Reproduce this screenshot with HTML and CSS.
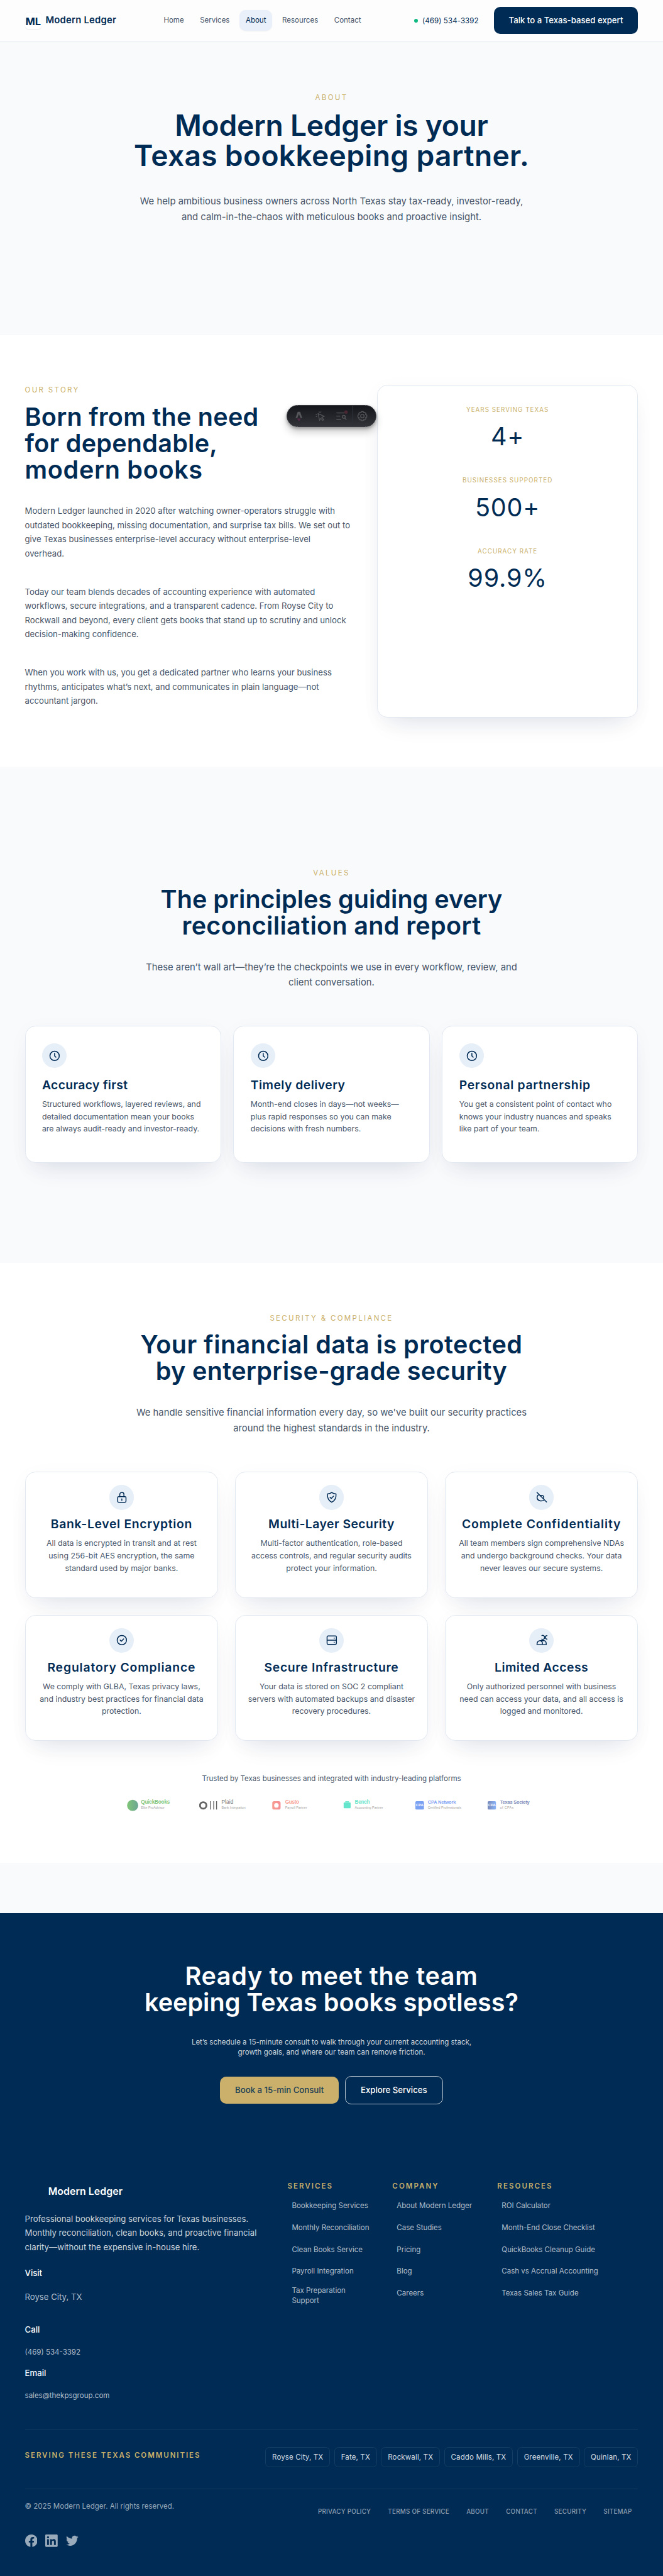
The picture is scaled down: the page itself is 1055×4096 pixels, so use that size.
FILE: index.html
```html
<!DOCTYPE html>
<html lang="en">
<head>
<meta charset="utf-8">
<title>About | Modern Ledger</title>
<link rel="stylesheet" href="styles.css">
</head>
<body>
<header class="header">
  <a class="brand"><span class="brand-mark">ML</span><span class="brand-name">Modern Ledger</span></a>
  <nav class="nav">
    <a>Home</a><a>Services</a><a class="active">About</a><a>Resources</a><a>Contact</a>
  </nav>
  <a class="phone"><span class="dot"></span>(469) 534-3392</a>
  <a class="btn btn-navy">Talk to a Texas-based expert</a>
</header>

<section class="hero">
  <p class="eyebrow">About</p>
  <h1><span class="track-tight">Modern Ledger is your</span><br><span class="track-2">Texas bookkeeping partner.</span></h1>
  <p class="lead">We help ambitious business owners across North Texas stay tax-ready, investor-ready,<br>and calm-in-the-chaos with meticulous books and proactive insight.</p>
</section>

<section class="story">
  <div class="story-text">
    <p class="eyebrow">Our story</p>
    <h2><span class="track-1">Born from the need</span><br><span class="track-1">for dependable,</span><br><span class="track-4">modern books</span></h2>
    <p class="para">Modern Ledger launched in 2020 after watching owner-operators struggle with<br>outdated bookkeeping, missing documentation, and surprise tax bills. We set out to<br>give Texas businesses enterprise-level accuracy without enterprise-level<br>overhead.</p>
    <p class="para">Today our team blends decades of accounting experience with automated<br>workflows, secure integrations, and a transparent cadence. From Royse City to<br>Rockwall and beyond, every client gets books that stand up to scrutiny and unlock<br>decision-making confidence.</p>
    <p class="para">When you work with us, you get a dedicated partner who learns your business<br>rhythms, anticipates what’s next, and communicates in plain language—not<br>accountant jargon.</p>
  </div>
  <div class="card stats">
    <div class="stat"><p class="stat-label">Years serving Texas</p><p class="stat-value">4+</p></div>
    <div class="stat"><p class="stat-label">Businesses supported</p><p class="stat-value">500+</p></div>
    <div class="stat"><p class="stat-label">Accuracy rate</p><p class="stat-value">99.9%</p></div>
  </div>
  <div class="toolbar">
    <svg class="tool" viewBox="0 0 24 24"><path d="M9.3 2.5h5.4L19.6 17c-1.800-.8-3-1-4.300-1.200L12 7.200 8.700 15.800C7.400 16 6.200 16.200 4.400 17z" fill="#55565a"/><path d="M8.200 17.200h7.600c0 2-1.700 2.700-2 4.300-.6.500-1.200 1-1.800 2-.6-2.200-3.300-2.800-3.800-6.300z" fill="#56294a"/></svg>
    <svg class="tool" viewBox="0 0 24 24" fill="none" stroke="#55565a" stroke-width="1.700" stroke-linejoin="round" stroke-linecap="round"><path d="M7 6.500l14 6-5.800 2.300 4.500 5-2.200 1.900-4.400-5-2.600 4.800z"/><path d="M2.500 8.500l1.500.3M3 13l1.500-1M9.500 2.500L10 4M13.500 2.500L12.800 4"/></svg>
    <svg class="tool" viewBox="0 0 24 24" fill="none" stroke="#55565a" stroke-width="1.900" stroke-linecap="round"><path d="M2.500 5h16M2.500 12h7M2.500 19h9"/><circle cx="18" cy="13.500" r="3.300"/><path d="M20.500 16.500l3 3"/><circle cx="23" cy="3" r="3.800" fill="#4a2833" stroke="none"/></svg>
    <span class="tool-divider"></span>
    <svg class="tool" viewBox="0 0 24 24" fill="none" stroke="#55565a" stroke-width="1.900" stroke-linejoin="round"><path d="M10 2h4l.8 2.300 2.200-.9 2.900 2.900-.9 2.200L21.800 10v4l-2.800 1.500.9 2.200-2.900 2.900-2.200-.9L14 22h-4l-.8-2.300-2.200.9-2.900-2.900.9-2.200L2.200 14v-4L5 8.500l-.9-2.200L7 3.400l2.200.9z"/><circle cx="12" cy="12" r="3.800"/></svg>
  </div>
</section>

<section class="values">
  <p class="eyebrow">Values</p>
  <h2>The principles guiding every<br><span class="track-2">reconciliation and report</span></h2>
  <p class="lead">These aren’t wall art—they’re the checkpoints we use in every workflow, review, and<br>client conversation.</p>
  <div class="value-grid">
    <article class="card value">
      <span class="icon"><svg viewBox="0 0 24 24"><circle cx="12" cy="12" r="9"/><path d="M12 7v5l2.500 2.500"/></svg></span>
      <h3 class="track-2">Accuracy first</h3>
      <p>Structured workflows, layered reviews, and<br>detailed documentation mean your books<br>are always audit-ready and investor-ready.</p>
    </article>
    <article class="card value">
      <span class="icon"><svg viewBox="0 0 24 24"><circle cx="12" cy="12" r="9"/><path d="M12 7v5l2.500 2.500"/></svg></span>
      <h3 class="track-3">Timely delivery</h3>
      <p>Month-end closes in days—not weeks—<br>plus rapid responses so you can make<br>decisions with fresh numbers.</p>
    </article>
    <article class="card value">
      <span class="icon"><svg viewBox="0 0 24 24"><circle cx="12" cy="12" r="9"/><path d="M12 7v5l2.500 2.500"/></svg></span>
      <h3 class="track-4">Personal partnership</h3>
      <p>You get a consistent point of contact who<br>knows your industry nuances and speaks<br>like part of your team.</p>
    </article>
  </div>
</section>

<section class="security">
  <p class="eyebrow">Security &amp; compliance</p>
  <h2><span class="track-3">Your financial data is protected</span><br><span class="track-2">by enterprise-grade security</span></h2>
  <p class="lead">We handle sensitive financial information every day, so we've built our security practices<br>around the highest standards in the industry.</p>
  <div class="security-grid">
    <article class="card guard">
      <span class="icon"><svg viewBox="0 0 24 24"><rect x="4" y="10.500" width="16" height="11" rx="2"/><path d="M8 10.500V6.500a4 4 0 0 1 8 0v4M12 15v3"/></svg></span>
      <h3 class="track-4">Bank-Level Encryption</h3>
      <p>All data is encrypted in transit and at rest<br>using 256-bit AES encryption, the same<br>standard used by major banks.</p>
    </article>
    <article class="card guard">
      <span class="icon"><svg viewBox="0 0 24 24"><path d="M12 2.500c2.500 2 5 2.700 8.300 2.900.5 8-2.300 13-8.300 16.100-6-3.100-8.800-8.100-8.300-16.100C7 5.200 9.500 4.500 12 2.500z"/><path d="M8.800 12l2.300 2.300 4.300-4.600"/></svg></span>
      <h3 class="track-3">Multi-Layer Security</h3>
      <p>Multi-factor authentication, role-based<br>access controls, and regular security audits<br>protect your information.</p>
    </article>
    <article class="card guard">
      <span class="icon"><svg viewBox="0 0 24 24"><path d="M3 2.500l18.500 18.500M5.500 7.500C1.500 11 2.800 17.500 9 18.700c2.500.5 4.800.3 6.800-1M9 9.200c1.500-1.800 6-1.300 7 1.300.4 1.500.2 3-.8 4"/></svg></span>
      <h3 class="track-5">Complete Confidentiality</h3>
      <p>All team members sign comprehensive NDAs<br>and undergo background checks. Your data<br>never leaves our secure systems.</p>
    </article>
    <article class="card guard">
      <span class="icon"><svg viewBox="0 0 24 24"><circle cx="12" cy="12" r="9"/><path d="M8.800 12l2.300 2.300 4.300-4.600"/></svg></span>
      <h3 class="track-5">Regulatory Compliance</h3>
      <p>We comply with GLBA, Texas privacy laws,<br>and industry best practices for financial data<br>protection.</p>
    </article>
    <article class="card guard">
      <span class="icon"><svg viewBox="0 0 24 24"><path d="M3 12.200V6a2 2 0 0 1 2-2h14a2 2 0 0 1 2 2v6.200M3 12.200h18M3 12.200v6a2 2 0 0 0 2 2h14a2 2 0 0 0 2-2v-6M16.800 8v.4M16.800 16v.4"/></svg></span>
      <h3 class="track-4">Secure Infrastructure</h3>
      <p>Your data is stored on SOC 2 compliant<br>servers with automated backups and disaster<br>recovery procedures.</p>
    </article>
    <article class="card guard">
      <span class="icon"><svg viewBox="0 0 24 24"><path d="M12.500 3.200c2-1 5 .2 5.300 3.300.2 3.300-3.200 5-5.600 3.700M22.500 3.200c-2 0-3.300 1.200-3.300 3.300s1.300 3.700 3.300 3.700M3 20.500h18c0-4.500-1.500-7.500-4.500-7.500H9.500C5.500 13 3 15.500 3 20.500zM10.500 13.300c2.500 1 3.300 3.500 3 7"/></svg></span>
      <h3 class="track-3">Limited Access</h3>
      <p>Only authorized personnel with business<br>need can access your data, and all access is<br>logged and monitored.</p>
    </article>
  </div>
  <p class="trusted">Trusted by Texas businesses and integrated with industry-leading platforms</p>
  <div class="logos">
    <svg viewBox="0 0 139 26">
      <defs><linearGradient id="qb"><stop offset="0" stop-color="#2ca01c"/><stop offset="1" stop-color="#0b6b4f"/></linearGradient></defs>
      <circle cx="11" cy="13" r="10.800" fill="url(#qb)"/>
      <text class="logo-name" x="27" y="10" textLength="56" fill="#2ca01c">QuickBooks</text><text class="logo-sub" x="27" y="19" textLength="45.500">Elite ProAdvisor</text>
    </svg>
    <svg viewBox="0 0 139 26">
      <circle cx="7.700" cy="13" r="6.200" fill="none" stroke="#000" stroke-width="3.500"/><path d="M22 5v16M28 5v16M33.500 5v16" stroke="#000" stroke-width="1.700"/>
      <text class="logo-name logo-regular" x="43" y="10" textLength="23" fill="#000">Plaid</text><text class="logo-sub" x="43" y="19" textLength="46.500">Bank Integration</text>
    </svg>
    <svg viewBox="0 0 139 26">
      <defs><linearGradient id="gu"><stop offset="0" stop-color="#f45d48"/><stop offset="1" stop-color="#ee4350"/></linearGradient></defs>
      <path fill-rule="evenodd" fill="url(#gu)" d="M5 5h9a3.500 3.500 0 0 1 3.500 3.500v9A3.500 3.500 0 0 1 14 21H5a3.500 3.500 0 0 1-3.500-3.500v-9A3.500 3.500 0 0 1 5 5zM9.500 8.600a4.400 4.400 0 1 0 0 8.800 4.400 4.400 0 1 0 0-8.800z"/>
      <text class="logo-name" x="26.500" y="10" textLength="27" fill="#f45d48">Gusto</text><text class="logo-sub" x="26.500" y="19" textLength="42">Payroll Partner</text>
    </svg>
    <svg viewBox="0 0 139 26">
      <rect x="1" y="7.200" width="13.500" height="11.300" rx="1.500" fill="#00d4aa"/><rect x="4.200" y="5" width="7" height="1.700" fill="#00d4aa"/>
      <text class="logo-name" x="22.500" y="10" textLength="29" fill="#00d4aa">Bench</text><text class="logo-sub" x="22.500" y="19" textLength="54.500">Accounting Partner</text>
    </svg>
    <svg viewBox="0 0 139 26">
      <rect x="0" y="5" width="16.500" height="16" rx="2" fill="#2563eb"/><text class="logo-cpa" x="1" y="14.300" textLength="14.500">CPA</text>
      <text class="logo-name logo-small" x="24" y="10" textLength="54" fill="#2563eb">CPA Network</text><text class="logo-sub" x="24" y="19" textLength="64.500">Certified Professionals</text>
    </svg>
    <svg viewBox="0 0 139 26">
      <defs><linearGradient id="tx"><stop offset="0" stop-color="#1e3a8a"/><stop offset="1" stop-color="#3b82f6"/></linearGradient></defs>
      <rect x="0" y="5" width="16" height="16" rx="2" fill="url(#tx)"/><text class="logo-cpa" x=".8" y="14.300" textLength="14.500">CPA</text>
      <text class="logo-name logo-small" x="24" y="10" textLength="57" fill="#1e3a8a">Texas Society</text><text class="logo-sub" x="24" y="19" textLength="26" fill="#555">of CPAs</text>
    </svg>
  </div>
</section>

<section class="cta">
  <h2><span class="track-4">Ready to meet the team</span><br>keeping Texas books spotless?</h2>
  <p>Let’s schedule a 15-minute consult to walk through your current accounting stack,<br>growth goals, and where our team can remove friction.</p>
  <div class="cta-buttons"><a class="btn btn-gold">Book a 15-min Consult</a><a class="btn btn-outline">Explore Services</a></div>
</section>

<footer class="footer">
  <div class="footer-top">
    <div class="footer-about">
      <p class="footer-brand">Modern Ledger</p>
      <p class="footer-desc">Professional bookkeeping services for Texas businesses.<br>Monthly reconciliation, clean books, and proactive financial<br>clarity—without the expensive in-house hire.</p>
      <p class="term">Visit</p><p class="detail city">Royse City, TX</p>
      <p class="term">Call</p><p class="detail">(469) 534-3392</p>
      <p class="term">Email</p><p class="detail">sales@thekpsgroup.com</p>
    </div>
    <div class="footer-col"><h4>Services</h4><ul><li>Bookkeeping Services</li><li>Monthly Reconciliation</li><li>Clean Books Service</li><li>Payroll Integration</li><li class="two-line">Tax Preparation<br>Support</li></ul></div>
    <div class="footer-col"><h4>Company</h4><ul><li>About Modern Ledger</li><li>Case Studies</li><li>Pricing</li><li>Blog</li><li>Careers</li></ul></div>
    <div class="footer-col"><h4>Resources</h4><ul><li>ROI Calculator</li><li>Month-End Close Checklist</li><li>QuickBooks Cleanup Guide</li><li>Cash vs Accrual Accounting</li><li>Texas Sales Tax Guide</li></ul></div>
  </div>
  <div class="communities">
    <h4>Serving these Texas communities</h4>
    <div class="pills"><span>Royse City, TX</span><span>Fate, TX</span><span>Rockwall, TX</span><span>Caddo Mills, TX</span><span>Greenville, TX</span><span>Quinlan, TX</span></div>
  </div>
  <div class="legal">
    <div>
      <p class="copyright">© 2025 Modern Ledger. All rights reserved.</p>
      <div class="social">
        <svg viewBox="0 0 24 24"><path d="M24 12.073C24 5.446 18.627.073 12 .073S0 5.446 0 12.073c0 5.990 4.388 10.954 10.125 11.854v-8.385H7.078v-3.470h3.047V9.430c0-3.007 1.792-4.669 4.533-4.669 1.312 0 2.686.235 2.686.235v2.953H15.830c-1.491 0-1.956.925-1.956 1.874v2.250h3.328l-.532 3.470h-2.796v8.385C19.612 23.027 24 18.062 24 12.073z"/></svg>
        <svg viewBox="0 0 24 24"><path d="M20.447 20.452h-3.554v-5.569c0-1.328-.027-3.037-1.852-3.037-1.853 0-2.136 1.445-2.136 2.939v5.667H9.351V9h3.414v1.561h.046c.477-.9 1.637-1.850 3.370-1.850 3.601 0 4.267 2.370 4.267 5.455v6.286zM5.337 7.433a2.062 2.062 0 0 1-2.063-2.065 2.064 2.064 0 1 1 2.063 2.065zm1.782 13.019H3.555V9h3.564v11.452zM22.225 0H1.771C.792 0 0 .774 0 1.729v20.542C0 23.227.792 24 1.771 24h20.451C23.200 24 24 23.227 24 22.271V1.729C24 .774 23.200 0 22.222 0h.003z"/></svg>
        <svg viewBox="0 0 24 24"><path d="M23.953 4.570a10 10 0 0 1-2.825.775 4.958 4.958 0 0 0 2.163-2.723c-.951.555-2.005.959-3.127 1.184a4.920 4.920 0 0 0-8.384 4.482C7.690 8.095 4.067 6.130 1.640 3.162a4.822 4.822 0 0 0-.666 2.475c0 1.710.870 3.213 2.188 4.096a4.904 4.904 0 0 1-2.228-.616v.060a4.923 4.923 0 0 0 3.946 4.827 4.996 4.996 0 0 1-2.212.085 4.936 4.936 0 0 0 4.604 3.417 9.867 9.867 0 0 1-6.102 2.105c-.390 0-.779-.023-1.170-.067a13.995 13.995 0 0 0 7.557 2.209c9.053 0 13.998-7.496 13.998-13.985 0-.210 0-.420-.015-.630A9.935 9.935 0 0 0 24 4.590z"/></svg>
      </div>
    </div>
    <nav class="legal-nav"><a>Privacy Policy</a><a>Terms of Service</a><a>About</a><a>Contact</a><a>Security</a><a>Sitemap</a></nav>
  </div>
</footer>
</body>
</html>
```
FILE: styles.css
```css
:root { --navy: #002b54; --gold: #cab06a; --slate: #475569; --line: #e2e8f0; --mist: #f9fafc; --display: Inter, "Liberation Sans", sans-serif; }
/* 1rem equals ten design pixels */
html { font-size: 8.2417px; }
* { box-sizing: border-box; margin: 0; padding: 0; }
body { font-family: Inter, "Liberation Sans", sans-serif; font-size: 1.6rem; color: var(--slate); background: var(--mist); white-space: nowrap; }
ul { list-style: none; }

.header { height: 8.1rem; display: flex; align-items: center; padding: 0 4.8rem; background: #fdfdfe; border-bottom: 1px solid var(--line); color: var(--navy); }
.brand { display: flex; align-items: center; gap: .8rem; width: 25.6rem; }
.brand-mark { width: 3.2rem; height: 3.2rem; line-height: 3.4rem; text-align: center; font-size: 2rem; font-weight: 700; background: #fff; border-radius: .6rem; box-shadow: 0 .1rem .2rem rgba(0, 0, 0, .08); }
.brand-name { font-family: var(--display); font-size: 1.8rem; font-weight: 600; line-height: 2.8rem; letter-spacing: .025rem; }
.nav { display: flex; gap: .7rem; flex: 1; }
.nav a { padding: 0 1.2rem; line-height: 4rem; font-size: 1.4rem; color: var(--slate); border-radius: 1.2rem; }
.nav .active { background: #e9f0f9; color: var(--navy); box-shadow: 0 .1rem .2rem rgba(0, 0, 0, .05); }
.phone { display: flex; align-items: center; gap: .8rem; margin-right: 2.9rem; font-size: 1.4rem; letter-spacing: .01rem; }
.dot { width: .8rem; height: .8rem; border-radius: 50%; background: #10b981; }
.btn { height: 5.2rem; line-height: 5.2rem; border-radius: 1.2rem; font-size: 1.6rem; font-weight: 500; text-align: center; }
.btn-navy { background: var(--navy); color: #fff; width: 27.9rem; }

.eyebrow { font-size: 1.4rem; line-height: 2rem; letter-spacing: .28rem; text-transform: uppercase; color: var(--gold); }
h1, h2, h3 { font-family: var(--display); font-weight: 600; color: var(--navy); }
h2 { font-size: 4.8rem; line-height: 5.1rem; }
.lead { font-size: 1.8rem; line-height: 2.97rem; }
.track-tight { letter-spacing: -.03rem; }
.track-1 { letter-spacing: .03rem; }
.track-2 { letter-spacing: .04rem; }
.track-3 { letter-spacing: .056rem; }
.track-4 { letter-spacing: .082rem; }
.track-5 { letter-spacing: .104rem; }

.hero { height: 56.55rem; padding-top: 9.69rem; background: var(--mist); text-align: center; }
.hero h1 { margin-top: 1.6rem; font-size: 5.6rem; line-height: 5.82rem; }
.hero .lead { margin-top: 4.35rem; }

.card { background: #fff; border: 1px solid var(--line); border-radius: 2rem; box-shadow: 0 2.8rem 4.8rem -2.4rem rgba(0, 43, 84, .14), 0 .8rem 4rem rgba(0, 43, 84, .03); }
.story { position: relative; height: 83.4rem; padding: 9.6rem 4.8rem 0; display: grid; grid-template-columns: 63.2rem 50.4rem; gap: 4.8rem; background: #fff; }
.story .eyebrow { margin-top: .05rem; }
.story h2 { margin-top: 1.55rem; }
.para { line-height: 2.72rem; margin-top: 4.7rem; }
h2 + .para { margin-top: 4.08rem; }
.stats { height: 64.2rem; padding-top: 3.7rem; text-align: center; }
.stat { height: 13.6rem; }
.stat-label { font-size: 1.2rem; line-height: 2rem; letter-spacing: .12rem; text-transform: uppercase; color: var(--gold); }
.stat-value { margin-top: 1.4rem; font-size: 4.8rem; line-height: 5.8rem; color: var(--navy); letter-spacing: .1rem; }
.toolbar { position: absolute; left: 55.27rem; top: 13.55rem; width: 17.46rem; height: 4.18rem; display: flex; align-items: center; padding: 0 1.3rem; border-radius: 3rem; background: linear-gradient(#14161b, #323338); border: 1px solid #3b3d43; box-shadow: 0 1rem 1.6rem rgba(0, 0, 0, .2), 0 .3rem .6rem rgba(0, 0, 0, .3); }
.tool { width: 2.1rem; height: 2.1rem; flex: none; overflow: visible; margin-right: 1.95rem; }
.tool-divider { width: 1px; align-self: stretch; background: #2e3037; margin-right: .9rem; margin-left: -.9rem; }
.tool:last-child { margin-right: 0; }

.values { height: 95.6rem; padding: 19.35rem 4.8rem 0; background: var(--mist); text-align: center; }
.values h2, .security h2 { margin-top: 1.52rem; line-height: 5.12rem; }
.values .lead { margin-top: 4rem; }
.value-grid { margin-top: 6.85rem; display: grid; grid-template-columns: repeat(3, 1fr); gap: 2.4rem; text-align: left; }
.value { height: 26.35rem; padding: 3.2rem; }
.icon { display: flex; align-items: center; justify-content: center; width: 4.8rem; height: 4.8rem; border-radius: 50%; background: #e6eef8; }
.icon svg { width: 2.4rem; height: 2.4rem; fill: none; stroke: var(--navy); stroke-width: 1.8; stroke-linecap: round; stroke-linejoin: round; }
h3 { font-size: 2.35rem; line-height: 2.8rem; }
.value h3 { margin-top: 1.87rem; }
.value p, .guard p { margin-top: 1.1rem; font-size: 1.5rem; line-height: 2.4rem; }

.security { height: 115.8rem; padding: 9.7rem 4.8rem 0; background: #fff; text-align: center; }
.security .lead { margin-top: 4.01rem; }
.security-grid { margin-top: 6.9rem; display: grid; grid-template-columns: repeat(3, 1fr); gap: 3.26rem 3.2rem; }
.guard { height: 24.35rem; padding-top: 2.4rem; }
.guard .icon { margin: 0 auto; }
.guard h3 { margin-top: 1.4rem; }
.trusted { margin-top: 6.17rem; font-size: 1.4rem; line-height: 2.4rem; }
.logos { display: grid; grid-template-columns: repeat(6, 13.93rem); margin: 2.5rem 0 0 19.7rem; opacity: .6; }
.logos svg { width: 13.9rem; height: 2.6rem; display: block; }
.logo-name { font: 700 10px "Liberation Sans", sans-serif; }
.logo-regular { font-weight: 400; }
.logo-small { font-size: 9px; }
.logo-sub { font: 6.5px "Liberation Sans", sans-serif; fill: #666; }
.logo-cpa { font: 700 7px "Liberation Sans", sans-serif; fill: #fff; }

.cta { margin-top: 9.7rem; height: 48.9rem; padding-top: 9.5rem; background: var(--navy); text-align: center; color: #fff; }
.cta h2 { color: #fff; }
.cta p { margin-top: 4.1rem; font-size: 1.4rem; line-height: 2rem; color: #ccd5dd; }
.cta-buttons { margin-top: 3.6rem; display: flex; justify-content: center; align-items: center; gap: 1.2rem; }
.btn-gold { width: 22.9rem; background: var(--gold); color: #1a3e56; }
.btn-outline { width: 18.9rem; height: 5.4rem; border: 1px solid #b8c4cf; color: #fff; }

.footer { height: 79rem; padding: 3.2rem 4.8rem 0; background: var(--navy); color: #99aabb; }
.footer-top { height: 47.65rem; display: grid; grid-template-columns: 50.7rem 20.26rem 20.26rem 1fr; border-bottom: 1px solid #12395f; }
.footer-brand { padding-left: 4.5rem; margin-top: .1rem; font: 600 1.94rem/2.8rem var(--display); color: #fff; }
.footer-desc { margin-top: 2.57rem; line-height: 2.72rem; color: #ccd5dd; }
.term { margin-top: 1.56rem; line-height: 2.4rem; font-weight: 500; color: #fff; }
.footer-desc + .term { margin-top: 2.52rem; }
.detail { margin-top: 1.95rem; font-size: 1.4rem; line-height: 2.4rem; color: #b3bfcc; }
.detail.city { font-size: 1.6rem; margin: 2.25rem 0 3.95rem; }
.footer h4 { font: 600 1.4rem/2rem var(--display); letter-spacing: .25rem; text-transform: uppercase; color: var(--gold); }
.footer-col h4 { margin-top: -.41rem; }
.footer-col ul { margin: .67rem 0 0 .85rem; }
.footer-col li { height: 4.195rem; display: flex; align-items: center; font-size: 1.4rem; line-height: 2rem; color: #b3bfcc; }
.footer-col .two-line { height: 5.2rem; }
.communities { height: 11.33rem; display: flex; justify-content: space-between; border-bottom: 1px solid #12395f; padding-top: 3.25rem; }
.footer .communities h4 { margin-top: .55rem; letter-spacing: .235rem; }
.pills { display: flex; gap: .8rem; }
.pills span { height: 3.9rem; line-height: 3.7rem; padding: 0 1.2rem; border: 1px solid #143d63; border-radius: .8rem; font-size: 1.4rem; letter-spacing: .016rem; color: #d4dce3; }
.legal { display: flex; justify-content: space-between; }
.copyright { margin-top: 2.2rem; font-size: 1.4rem; line-height: 2.4rem; }
.social { display: flex; gap: 1.6rem; margin-top: 4.2rem; }
.social svg { width: 2.4rem; height: 2.4rem; fill: #99aabb; }
.legal-nav { display: flex; gap: 3.3rem; padding: 3.15rem 1.2rem 0 0; font-size: 1.2rem; line-height: 2.4rem; font-weight: 500; letter-spacing: .025rem; text-transform: uppercase; color: #8a9db1; }
```
